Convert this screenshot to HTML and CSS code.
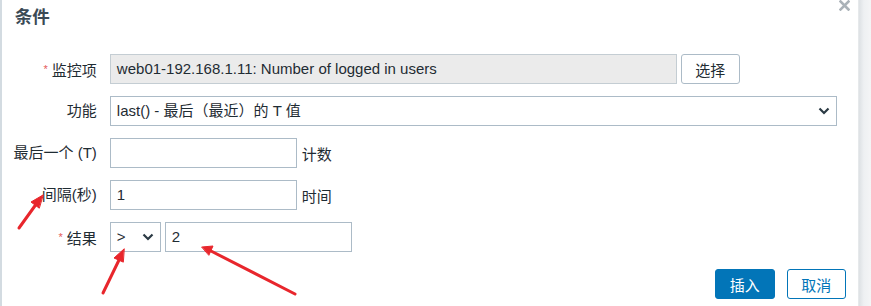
FILE: index.html
```html
<!DOCTYPE html>
<html lang="zh">
<head>
<meta charset="utf-8">
<title>条件</title>
<link rel="stylesheet" href="styles.css">
</head>
<body>
<div class="page">
  <div class="edge-left"></div>
  <div class="dialog">
    <div class="header">
      <h2 class="title">条件</h2>
      <span class="close" aria-label="关闭">
        <svg width="11" height="11" viewBox="0 0 11 11"><path d="M1.5 1.5 L9.5 9.5 M9.5 1.5 L1.5 9.5" stroke="#aab2b8" stroke-width="2.6" stroke-linecap="square"/></svg>
      </span>
    </div>
    <div class="form">
      <label class="label"><span class="req">*</span> 监控项</label>
      <div class="field">
        <div class="input readonly wide">web01-192.168.1.11: Number of logged in users</div>
        <button class="btn btn-plain">选择</button>
      </div>

      <label class="label">功能</label>
      <div class="field">
        <div class="input select full">
          <span>last() - 最后（最近）的 T 值</span>
          <svg class="chev" width="12" height="8" viewBox="0 0 12 8"><path d="M1.5 1.5 L6 6 L10.5 1.5" fill="none" stroke="#2b3a44" stroke-width="2.2"/></svg>
        </div>
      </div>

      <label class="label">最后一个 (T)</label>
      <div class="field">
        <div class="input short"></div>
        <span class="unit">计数</span>
      </div>

      <label class="label">间隔(秒)</label>
      <div class="field">
        <div class="input short">1</div>
        <span class="unit">时间</span>
      </div>

      <label class="label"><span class="req">*</span> 结果</label>
      <div class="field">
        <div class="input select op">
          <span>&gt;</span>
          <svg class="chev" width="12" height="8" viewBox="0 0 12 8"><path d="M1.5 1.5 L6 6 L10.5 1.5" fill="none" stroke="#2b3a44" stroke-width="2.2"/></svg>
        </div>
        <div class="input short">2</div>
      </div>
    </div>
    <div class="footer">
      <button class="btn btn-primary">插入</button>
      <button class="btn btn-outline">取消</button>
    </div>
  </div>
  <div class="shadow"></div>
  <svg class="annot" width="871" height="306" viewBox="0 0 871 306">
    <g stroke="#e8262c" stroke-width="3" stroke-linecap="round" fill="#e8262c">
      <line x1="19" y1="228" x2="37" y2="203"/>
      <polygon points="43,195 31,202 39,208" stroke-width="1"/>
      <line x1="103" y1="293" x2="120" y2="258"/>
      <polygon points="124,249 114,258 123,262" stroke-width="1"/>
      <line x1="295" y1="294" x2="211" y2="251"/>
      <polygon points="202,247 213,246 209,255" stroke-width="1"/>
    </g>
  </svg>
</div>
</body>
</html>
```

FILE: styles.css
```css
html, body {
  margin: 0;
  padding: 0;
  background: #ffffff;
}

body {
  font-family: "Liberation Sans", Arial, "Noto Sans CJK SC", sans-serif;
  font-size: 15px;
  color: #1f2c33;
}

.page {
  position: relative;
  display: flex;
  width: 871px;
  height: 306px;
  overflow: hidden;
}

.edge-left {
  width: 2px;
  background: #d3dbe1;
}

.dialog {
  width: 856px;
  display: flex;
  flex-direction: column;
  box-sizing: border-box;
}

.header {
  position: relative;
  height: 34px;
  padding: 5px 0 0 13px;
  box-sizing: border-box;
}

.title {
  margin: 0;
  font-size: 17.5px;
  line-height: 22px;
  font-weight: bold;
  color: #3a4a55;
  font-family: "Noto Sans CJK SC", "Liberation Sans", sans-serif;
}

.close {
  position: absolute;
  top: 0;
  right: 8px;
  line-height: 0;
}

.form {
  margin-top: 20px;
  display: grid;
  grid-template-columns: 95px 1fr;
  column-gap: 13px;
  row-gap: 12px;
  padding-right: 21px;
}

.label {
  text-align: right;
  height: 30px;
  line-height: 30px;
  white-space: nowrap;
  color: #1f2c33;
}

.req {
  color: #e45959;
  font-size: 11px;
  vertical-align: 3px;
}

.field {
  display: flex;
  align-items: center;
  gap: 4px;
  height: 30px;
}

.input {
  height: 30px;
  box-sizing: border-box;
  border: 1px solid #acbbc7;
  background: #ffffff;
  padding: 0 6px;
  line-height: 28px;
  white-space: nowrap;
  overflow: hidden;
  color: #1f2c33;
}

.readonly {
  background: #ebebeb;
  border-color: #c4cdd3;
}

.wide { width: 567px; }
.full { width: 727px; }
.short { width: 187px; }
.op { width: 51px; }

.select {
  display: flex;
  align-items: center;
  justify-content: space-between;
  padding-right: 6px;
}

.chev {
  flex: none;
}

.unit {
  margin-left: 1px;
}

.btn {
  font-family: "Liberation Sans", Arial, "Noto Sans CJK SC", sans-serif;
  font-size: 15px;
  height: 30px;
  box-sizing: border-box;
  border-radius: 3px;
  padding: 0;
  cursor: pointer;
}

.btn-plain {
  width: 59px;
  background: #ffffff;
  border: 1px solid #acbbc7;
  color: #1f2c33;
}

.footer {
  margin-top: 17px;
  display: flex;
  justify-content: flex-end;
  gap: 12px;
  padding-right: 12px;
}

.btn-primary {
  width: 60px;
  background: #0275b8;
  border: 1px solid #0275b8;
  color: #ffffff;
}

.btn-outline {
  width: 59px;
  background: #ffffff;
  border: 1px solid #0275b8;
  color: #0275b8;
}

.shadow {
  width: 13px;
  background: linear-gradient(to right, #dde1e4, #eef0f2 40%, #f4f5f6);
  border-left: 1px solid #e6e9eb;
}

.annot {
  position: absolute;
  left: 0;
  top: 0;
  pointer-events: none;
}
```
